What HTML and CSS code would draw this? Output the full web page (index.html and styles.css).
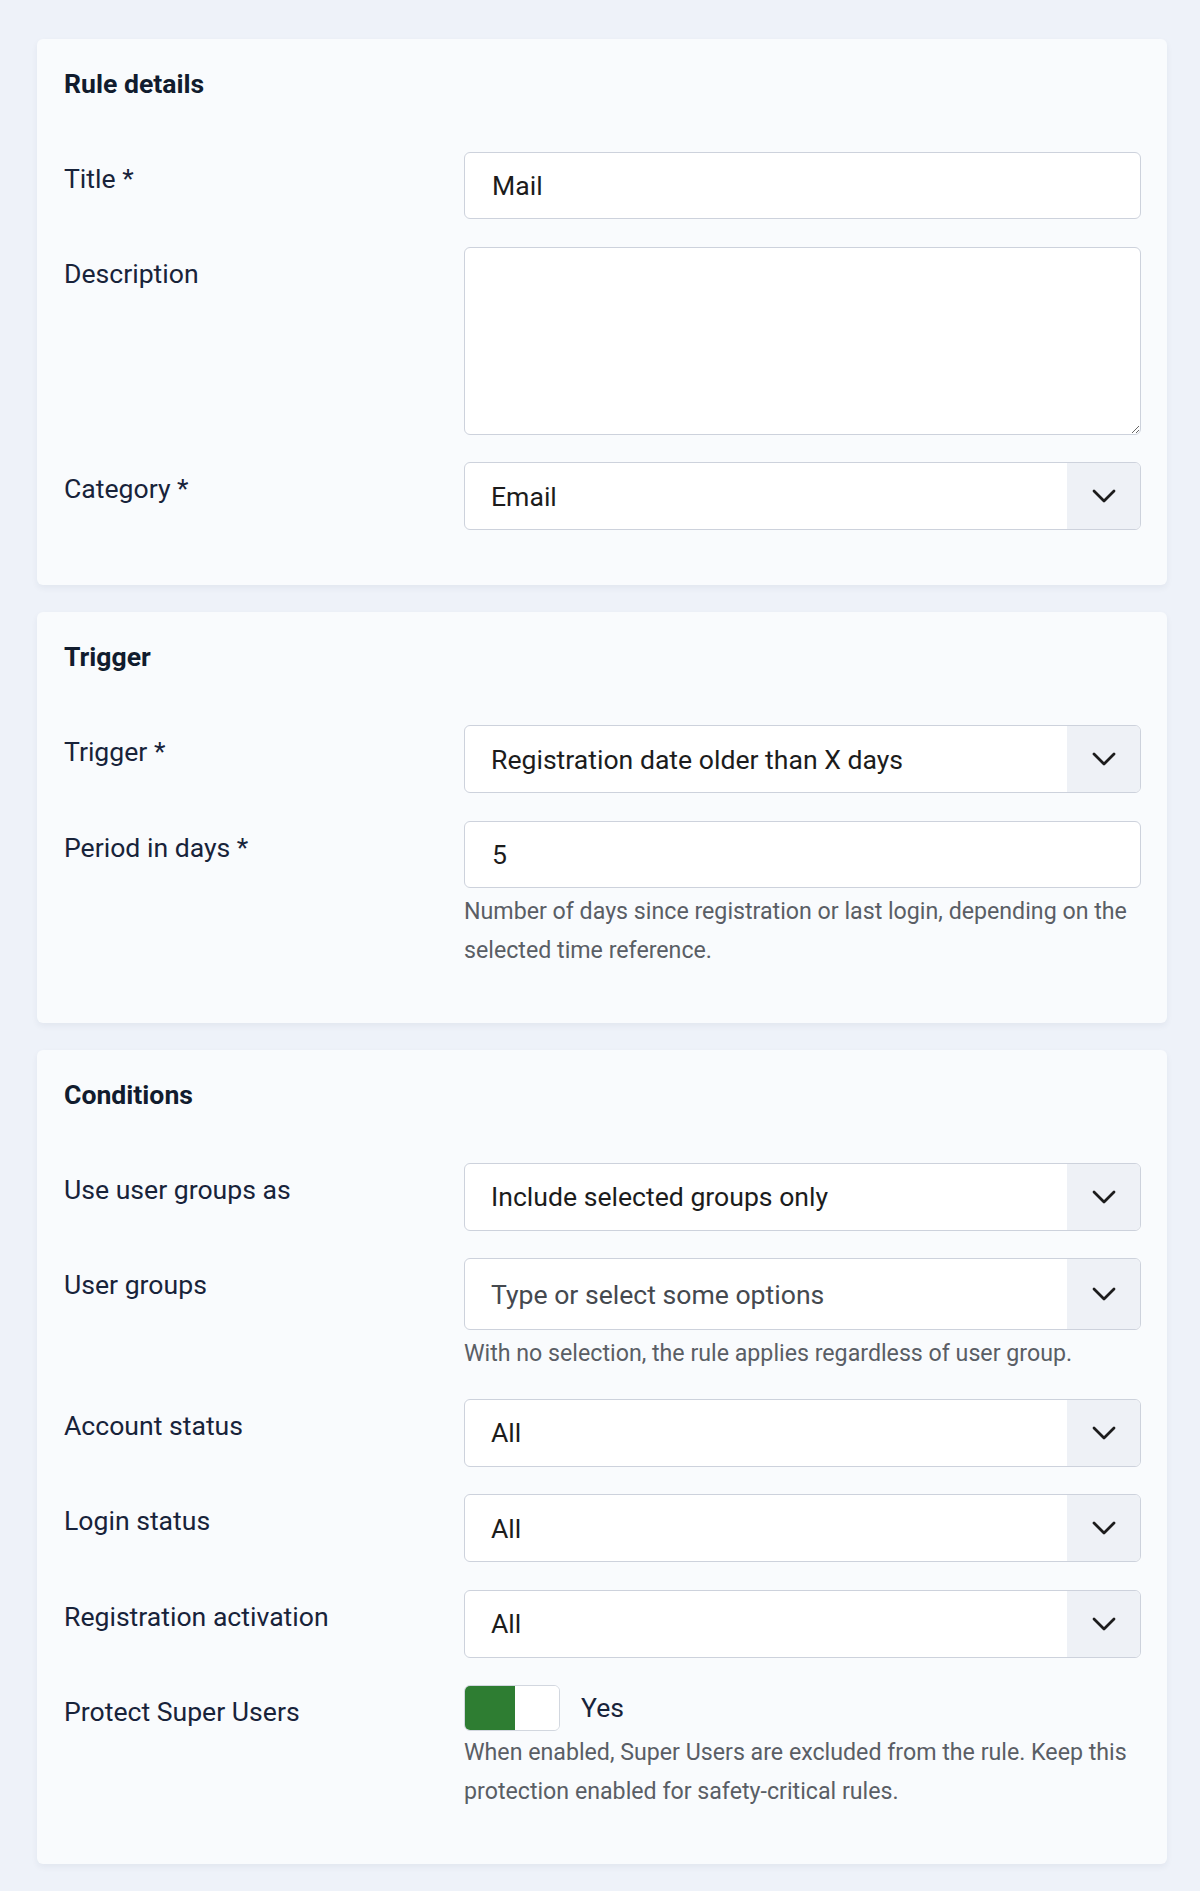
FILE: index.html
```html
<!DOCTYPE html>
<html lang="en">
<head>
<meta charset="utf-8">
<title>Rule</title>
<link rel="stylesheet" href="styles.css">
</head>
<body>
<main class="page">
  <section class="card">
    <h2 class="card-title">Rule details</h2>
    <div class="fields">
      <div class="row">
        <label class="label">Title *</label>
        <div class="control"><input class="input" type="text" value="Mail"></div>
      </div>
      <div class="row">
        <label class="label">Description</label>
        <div class="control"><textarea class="textarea"></textarea></div>
      </div>
      <div class="row">
        <label class="label">Category *</label>
        <div class="control">
          <div class="select"><span class="value">Email</span><span class="caret"><svg width="24" height="14" viewBox="0 0 24 14"><polyline points="2,2 12,12 22,2" fill="none" stroke="#1c1c1c" stroke-width="2.8" stroke-linecap="round" stroke-linejoin="round"/></svg></span></div>
        </div>
      </div>
    </div>
  </section>

  <section class="card">
    <h2 class="card-title">Trigger</h2>
    <div class="fields">
      <div class="row">
        <label class="label">Trigger *</label>
        <div class="control">
          <div class="select"><span class="value">Registration date older than X days</span><span class="caret"><svg width="24" height="14" viewBox="0 0 24 14"><polyline points="2,2 12,12 22,2" fill="none" stroke="#1c1c1c" stroke-width="2.8" stroke-linecap="round" stroke-linejoin="round"/></svg></span></div>
        </div>
      </div>
      <div class="row">
        <label class="label">Period in days *</label>
        <div class="control">
          <input class="input" type="text" value="5">
          <p class="help">Number of days since registration or last login, depending on the selected time reference.</p>
        </div>
      </div>
    </div>
  </section>

  <section class="card">
    <h2 class="card-title">Conditions</h2>
    <div class="fields">
      <div class="row">
        <label class="label">Use user groups as</label>
        <div class="control">
          <div class="select"><span class="value">Include selected groups only</span><span class="caret"><svg width="24" height="14" viewBox="0 0 24 14"><polyline points="2,2 12,12 22,2" fill="none" stroke="#1c1c1c" stroke-width="2.8" stroke-linecap="round" stroke-linejoin="round"/></svg></span></div>
        </div>
      </div>
      <div class="row">
        <label class="label">User groups</label>
        <div class="control">
          <div class="select select-tall"><span class="value placeholder">Type or select some options</span><span class="caret"><svg width="24" height="14" viewBox="0 0 24 14"><polyline points="2,2 12,12 22,2" fill="none" stroke="#1c1c1c" stroke-width="2.8" stroke-linecap="round" stroke-linejoin="round"/></svg></span></div>
          <p class="help">With no selection, the rule applies regardless of user group.</p>
        </div>
      </div>
      <div class="row">
        <label class="label">Account status</label>
        <div class="control">
          <div class="select"><span class="value">All</span><span class="caret"><svg width="24" height="14" viewBox="0 0 24 14"><polyline points="2,2 12,12 22,2" fill="none" stroke="#1c1c1c" stroke-width="2.8" stroke-linecap="round" stroke-linejoin="round"/></svg></span></div>
        </div>
      </div>
      <div class="row">
        <label class="label">Login status</label>
        <div class="control">
          <div class="select"><span class="value">All</span><span class="caret"><svg width="24" height="14" viewBox="0 0 24 14"><polyline points="2,2 12,12 22,2" fill="none" stroke="#1c1c1c" stroke-width="2.8" stroke-linecap="round" stroke-linejoin="round"/></svg></span></div>
        </div>
      </div>
      <div class="row">
        <label class="label">Registration activation</label>
        <div class="control">
          <div class="select"><span class="value">All</span><span class="caret"><svg width="24" height="14" viewBox="0 0 24 14"><polyline points="2,2 12,12 22,2" fill="none" stroke="#1c1c1c" stroke-width="2.8" stroke-linecap="round" stroke-linejoin="round"/></svg></span></div>
        </div>
      </div>
      <div class="row">
        <label class="label">Protect Super Users</label>
        <div class="control">
          <div class="switch-line">
            <span class="switch"><span class="switch-on"></span><span class="switch-knob"></span></span>
            <span class="switch-text">Yes</span>
          </div>
          <p class="help help-switch">When enabled, Super Users are excluded from the rule. Keep this protection enabled for safety-critical rules.</p>
        </div>
      </div>
    </div>
  </section>
</main>
</body>
</html>
```

FILE: styles.css
```css
* { box-sizing: border-box; }

html, body {
  margin: 0;
  padding: 0;
}

body {
  background: #eef2f9;
  font-family: Roboto, "Liberation Sans", Arial, sans-serif;
  color: #18233a;
}

.page {
  display: flex;
  flex-direction: column;
  gap: 27px;
  padding: 39px 33px 26px 37px;
}

.card {
  background: #f9fbfd;
  border-radius: 6px;
  box-shadow: 0 3px 6px rgba(30, 50, 90, 0.06);
  padding: 27px 26px 55px 27px;
}

.card-title {
  margin: 0 0 50px;
  font-size: 26.6px;
  line-height: 36px;
  font-weight: 700;
  color: #111c2e;
}

.fields {
  display: flex;
  flex-direction: column;
  gap: 27.5px;
}

.row {
  display: grid;
  grid-template-columns: 400px 1fr;
}

.label {
  padding-top: 9px;
  font-size: 26.6px;
  line-height: 36px;
  color: #18233a;
}

.control {
  min-width: 0;
}

.input {
  display: block;
  width: 100%;
  height: 67px;
  margin: 0;
  padding: 0 27px;
  border: 1px solid #cdd2dc;
  border-radius: 6px;
  background: #fff;
  font-family: Roboto, "Liberation Sans", Arial, sans-serif;
  font-size: 26.6px;
  color: #1c1c1c;
  outline: none;
}

.textarea {
  display: block;
  width: 100%;
  height: 188px;
  margin: 0;
  padding: 14px 27px;
  border: 1px solid #cdd2dc;
  border-radius: 6px;
  background: #fff;
  font-family: Roboto, "Liberation Sans", Arial, sans-serif;
  font-size: 26.6px;
  resize: vertical;
  outline: none;
}

.select {
  display: flex;
  align-items: stretch;
  height: 68px;
  border: 1px solid #cdd2dc;
  border-radius: 6px;
  background: #fff;
  overflow: hidden;
}

.select-tall {
  height: 72px;
}

.value {
  flex: 1;
  display: flex;
  align-items: center;
  padding-left: 26px;
  font-size: 26.6px;
  color: #1c1c1c;
  white-space: nowrap;
}

.placeholder {
  color: #45494f;
}

.caret {
  width: 73px;
  display: flex;
  align-items: center;
  justify-content: center;
  background: #eef1f6;
}

.help {
  margin: 4px 0 -2px;
  font-size: 23.2px;
  line-height: 39px;
  color: #5a5e65;
}

.help-switch {
  margin-top: 2px;
}

.switch-line {
  display: flex;
  align-items: center;
  gap: 21px;
}

.switch {
  display: flex;
  width: 96px;
  height: 46px;
  border: 1px solid #d2d7df;
  border-radius: 6px;
  background: #fff;
  overflow: hidden;
}

.switch-on {
  width: 50px;
  background: #2e7d32;
}

.switch-knob {
  flex: 1;
  background: #fff;
}

.switch-text {
  font-size: 26.6px;
  line-height: 36px;
  color: #18233a;
}
```
